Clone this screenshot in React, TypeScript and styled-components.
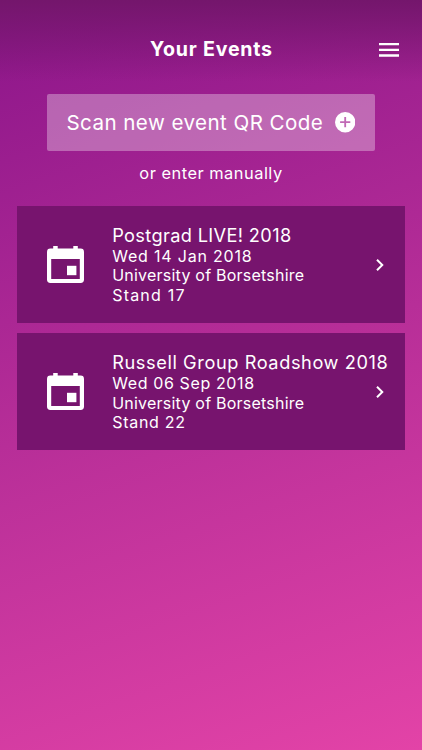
import React from 'react';
import styled, { createGlobalStyle } from 'styled-components';

const GlobalStyle = createGlobalStyle`
  *, *::before, *::after { box-sizing: border-box; }
  body { margin: 0; }
  button { font: inherit; color: inherit; border: 0; background: none; padding: 0; cursor: pointer; }
  h1, h2, p { margin: 0; font-weight: 400; }
  svg { display: block; }
`;

const Screen = styled.main`
  display: flex;
  flex-direction: column;
  height: 100vh;
  min-height: 750px;
  color: #fff;
  font-family: Inter, Montserrat, sans-serif;
  background:
    linear-gradient(180deg, #74166c 0%, rgba(116, 22, 108, 0) 82px) no-repeat,
    linear-gradient(161deg, #8a168a 0%, #92198c 8%, #b72e98 50%, #e343a7 100%);
`;

const Header = styled.header`
  display: grid;
  grid-template-columns: 1fr auto 1fr;
  align-items: center;
  height: 94px;
  padding: 5px 23px 0 24px;
`;

const Title = styled.h1`
  grid-column: 2;
  margin-bottom: 1.5px;
  font-size: 19.6px;
  font-weight: 700;
  line-height: 24px;
  letter-spacing: 0.78px;
`;

const MenuButton = styled.button`
  justify-self: end;
`;

const ScanButton = styled.button`
  display: flex;
  align-items: center;
  justify-content: space-between;
  width: 328px;
  height: 57px;
  margin: 0 auto 0 47px;
  padding: 0 19.6px 0 19.4px;
  border-radius: 2px;
  background: rgba(255, 255, 255, 0.32);
`;

const ScanLabel = styled.span`
  font-size: 20.6px;
  line-height: 24px;
  letter-spacing: 0.43px;
  white-space: nowrap;
`;

const ManualLink = styled.button`
  align-self: center;
  height: 44px;
  margin-bottom: 11px;
  font-size: 16.4px;
  line-height: 43px;
  letter-spacing: 0.5px;
`;

const EventList = styled.section`
  display: flex;
  flex-direction: column;
  gap: 10.3px;
  padding: 0 16.7px;
`;

const Card = styled.article`
  display: grid;
  grid-template-columns: 95.5px 1fr auto;
  align-items: center;
  height: 117px;
  padding: 0 21px 0 0;
  background: #77146e;
`;

const CalendarSlot = styled.div`
  padding-left: 30px;
`;

const Details = styled.div`
  width: 260px;
  padding-top: 1.3px;
  white-space: nowrap;
`;

const EventName = styled.h2<{ $tracking: number }>`
  margin-bottom: 2px;
  font-size: 18.2px;
  line-height: 20px;
  letter-spacing: ${({ $tracking }) => $tracking}px;
`;

const Line = styled.p<{ $tracking: number }>`
  font-size: 16px;
  line-height: 19.4px;
  letter-spacing: ${({ $tracking }) => $tracking}px;
`;

const MenuIcon = () => (
  <svg width="20" height="14" viewBox="0 0 20 14" fill="#fff" aria-hidden="true">
    <path d="M0 0h20v2.3H0zM0 5.7h20V8H0zM0 11.3h20v2.4H0z" />
  </svg>
);

const AddIcon = () => (
  <svg width="20.4" height="20.4" viewBox="0 0 20 20" fill="#fff" aria-hidden="true">
    <path
      fillRule="evenodd"
      d="M10 0a10 10 0 1 0 0 20a10 10 0 0 0 0-20zM15 10.9h-4.1V15H9.1v-4.1H5V9.1h4.1V5h1.8v4.1H15z"
    />
  </svg>
);

const CalendarIcon = () => (
  <svg width="37" height="37" viewBox="0 0 37 37" fill="#fff" aria-hidden="true">
    <path
      fillRule="evenodd"
      d="M6.2 0h4.5v2.6h15.6V0h4.5v2.6H33.6A3.4 3.4 0 0 1 37 6v27.6A3.4 3.4 0 0 1 33.6 37H3.4A3.4 3.4 0 0 1 0 33.6V6A3.4 3.4 0 0 1 3.4 2.6h2.8zM4.2 13v20h28.6V13z"
    />
    <path d="M20 19.8h9.4v9.4H20z" />
  </svg>
);

const ChevronIcon = () => (
  <svg width="8" height="12" viewBox="8.3 6 8 12" fill="#fff" aria-hidden="true">
    <path d="M10 6L8.59 7.41 13.17 12l-4.58 4.59L10 18l6-6z" />
  </svg>
);

interface FairEvent {
  name: string;
  nameTracking: number;
  lines: { text: string; tracking: number }[];
}

const events: FairEvent[] = [
  {
    name: 'Postgrad LIVE! 2018',
    nameTracking: 0.36,
    lines: [
      { text: 'Wed 14 Jan 2018', tracking: 0.8 },
      { text: 'University of Borsetshire', tracking: 0.23 },
      { text: 'Stand 17', tracking: 1.2 },
    ],
  },
  {
    name: 'Russell Group Roadshow 2018',
    nameTracking: 0.59,
    lines: [
      { text: 'Wed 06 Sep 2018', tracking: 0.62 },
      { text: 'University of Borsetshire', tracking: 0.23 },
      { text: 'Stand 22', tracking: 0.72 },
    ],
  },
];

export default function App() {
  return (
    <>
      <GlobalStyle />
      <Screen>
        <Header>
          <Title>Your Events</Title>
          <MenuButton aria-label="Menu">
            <MenuIcon />
          </MenuButton>
        </Header>
        <ScanButton>
          <ScanLabel>Scan new event QR Code</ScanLabel>
          <AddIcon />
        </ScanButton>
        <ManualLink>or enter manually</ManualLink>
        <EventList>
          {events.map((event) => (
            <Card key={event.name}>
              <CalendarSlot>
                <CalendarIcon />
              </CalendarSlot>
              <Details>
                <EventName $tracking={event.nameTracking}>{event.name}</EventName>
                {event.lines.map((line) => (
                  <Line key={line.text} $tracking={line.tracking}>
                    {line.text}
                  </Line>
                ))}
              </Details>
              <ChevronIcon />
            </Card>
          ))}
        </EventList>
      </Screen>
    </>
  );
}
